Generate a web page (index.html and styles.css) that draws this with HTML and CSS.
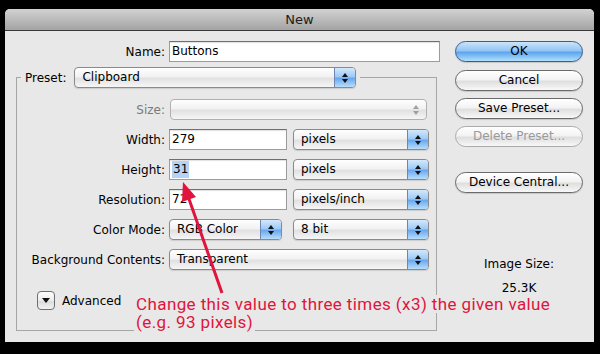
FILE: index.html
```html
<!DOCTYPE html>
<html lang="en">
<head>
    <meta charset="UTF-8">
    <meta name="viewport" content="width=device-width, initial-scale=1.0">
    <title>New</title>
    <link rel="stylesheet" href="styles.css">
</head>
<body>
    <div class="dialog">
        <div class="titlebar">New</div>

        <div class="content">
            <div class="form">
                <div class="row name-row">
                    <label class="lbl">Name:</label>
                    <div class="field name-field">Buttons</div>
                </div>

                <fieldset class="group">
                    <legend class="legend">
                        <div class="legend-inner">
                            <label class="legend-lbl">Preset:</label>
                            <div class="popup preset">Clipboard<span class="arrows"></span></div>
                        </div>
                    </legend>

                    <div class="row">
                        <label class="lbl inner muted">Size:</label>
                        <div class="popup disabled size-popup"><span class="arrows"></span></div>
                    </div>

                    <div class="row">
                        <label class="lbl inner">Width:</label>
                        <div class="field num-field">279</div>
                        <div class="popup unit">pixels<span class="arrows"></span></div>
                    </div>

                    <div class="row">
                        <label class="lbl inner">Height:</label>
                        <div class="field num-field"><span class="selected">31</span></div>
                        <div class="popup unit">pixels<span class="arrows"></span></div>
                    </div>

                    <div class="row">
                        <label class="lbl inner">Resolution:</label>
                        <div class="field num-field">72</div>
                        <div class="popup unit">pixels/inch<span class="arrows"></span></div>
                    </div>

                    <div class="row">
                        <label class="lbl inner">Color Mode:</label>
                        <div class="popup mode">RGB Color<span class="arrows"></span></div>
                        <div class="popup unit">8 bit<span class="arrows"></span></div>
                    </div>

                    <div class="row">
                        <label class="lbl inner">Background Contents:</label>
                        <div class="popup bg-popup">Transparent<span class="arrows"></span></div>
                    </div>

                    <div class="advanced">
                        <span class="disclosure"></span>
                        <span>Advanced</span>
                    </div>
                </fieldset>
            </div>

            <div class="side">
                <button class="btn btn-default">OK</button>
                <button class="btn">Cancel</button>
                <button class="btn">Save Preset...</button>
                <button class="btn" disabled>Delete Preset...</button>
                <button class="btn btn-device">Device Central...</button>

                <div class="image-size">
                    <div>Image Size:</div>
                    <div>25.3K</div>
                </div>
            </div>
        </div>
    </div>

    <!-- annotation drawn over the screenshot -->
    <div class="note">
        <span class="note-line">Change this value to three times (x3) the given value</span>
        <span class="note-line">(e.g. 93 pixels)</span>
    </div>

    <svg class="arrow" width="600" height="354" viewBox="0 0 600 354">
        <line x1="222" y1="293" x2="189" y2="199" stroke="#e0143c" stroke-width="3"/>
        <polygon points="183,182 196,197 182,202" fill="#e0143c"/>
    </svg>
</body>
</html>
```

FILE: styles.css
```css
body {
    margin: 0;
    width: 600px;
    height: 354px;
    overflow: hidden;
    background-color: #000;
    font-family: "DejaVu Sans", sans-serif;
    font-size: 12px;
    color: #000;
}

.dialog {
    margin: 9px 0 0 5px;
    width: 589px;
    height: 333px;
    background-color: #e8e8e8;
    border-radius: 5px 5px 0 0;
}

.titlebar {
    height: 21px;
    line-height: 21px;
    text-align: center;
    font-size: 13px;
    color: #1c1c1c;
    background: linear-gradient(#d2d2d2, #a3a3a3);
    border-bottom: 1px solid #3a3a3a;
    border-radius: 5px 5px 0 0;
}

.content {
    display: flex;
    gap: 15px;
    padding-top: 10px;
}

.form {
    width: 435px;
}

.row {
    display: flex;
    align-items: center;
    height: 21px;
    margin-bottom: 9px;
}
.name-row {
    margin-bottom: 0;
}

.lbl {
    width: 160px;
    margin-right: 4px;
    text-align: right;
    flex-shrink: 0;
}
.lbl.inner {
    width: 148px;
}
.muted {
    color: #7a7a7a;
}

/* text fields */
.field {
    box-sizing: border-box;
    height: 21px;
    line-height: 19px;
    padding: 0 2px;
    background-color: #fff;
    border: 1px solid #9c9c9c;
    border-top-color: #6f6f6f;
    box-shadow: inset 0 1px 1px rgba(0,0,0,0.12);
    white-space: nowrap;
}
.name-field {
    width: 271px;
}
.num-field {
    width: 118px;
    margin-right: 6px;
}
.selected {
    background-color: #b5d3f5;
    padding: 1px 1px 2px;
}

/* popup menus */
.popup {
    box-sizing: border-box;
    height: 21px;
    line-height: 19px;
    display: flex;
    padding-left: 7px;
    border: 1px solid #8a8a8a;
    border-radius: 4px;
    background: linear-gradient(#fefefe, #f2f2f2 45%, #e1e1e1 55%, #f6f6f6);
    box-shadow: 0 1px 1px rgba(0,0,0,0.12);
    white-space: nowrap;
}
.arrows {
    margin-left: auto;
    width: 20px;
    display: flex;
    flex-direction: column;
    align-items: center;
    justify-content: center;
    gap: 2px;
    border-left: 1px solid #6f87b0;
    border-radius: 0 3px 3px 0;
    background: linear-gradient(#d3e8fc, #9fcaf5 45%, #6aa8ee 55%, #b8defb);
}
.arrows::before,
.arrows::after {
    content: "";
    width: 0;
    height: 0;
    border-left: 3px solid transparent;
    border-right: 3px solid transparent;
}
.arrows::before {
    border-bottom: 4px solid #111;
}
.arrows::after {
    border-top: 4px solid #111;
}
.popup.disabled {
    border-color: #b0b0b0;
    box-shadow: none;
}
.popup.disabled .arrows {
    background: transparent;
    border-left: none;
}
.popup.disabled .arrows::before {
    border-bottom-color: #a0a0a0;
}
.popup.disabled .arrows::after {
    border-top-color: #a0a0a0;
}

.preset {
    width: 282px;
}
.size-popup {
    width: 257px;
    margin-left: 1px;
}
.unit {
    width: 136px;
}
.mode {
    width: 113px;
    margin-right: 11px;
}
.bg-popup {
    width: 260px;
}

/* preset group */
.group {
    box-sizing: border-box;
    width: 421px;
    margin: 5px 0 0 11px;
    padding: 11px 0 20px 0;
    border: 1px solid #a6a6a6;
    min-inline-size: 0;
}
.legend {
    margin-left: 4px;
    padding: 0 4px;
}
.legend-inner {
    display: flex;
    align-items: center;
    gap: 8px;
}

.advanced {
    display: flex;
    align-items: center;
    gap: 7px;
    height: 19px;
    margin: 21px 0 0 20px;
}
.disclosure {
    box-sizing: border-box;
    width: 18px;
    height: 19px;
    display: flex;
    align-items: center;
    justify-content: center;
    border: 1px solid #6e6e6e;
    border-radius: 4px;
    background: linear-gradient(#fdfdfd, #ececec 50%, #dcdcdc 55%, #f2f2f2);
}
.disclosure::after {
    content: "";
    border-left: 4px solid transparent;
    border-right: 4px solid transparent;
    border-top: 5px solid #111;
}

/* right column */
.side {
    width: 128px;
    display: flex;
    flex-direction: column;
}
.btn {
    box-sizing: border-box;
    height: 21px;
    margin-bottom: 7px;
    padding: 0;
    font-family: "DejaVu Sans", sans-serif;
    font-size: 12px;
    line-height: 19px;
    color: #000;
    border: 1px solid #6a6a6a;
    border-radius: 11px;
    background: linear-gradient(#ffffff, #f3f3f3 45%, #dfdfdf 55%, #f8f8f8);
    box-shadow: 0 1px 1px rgba(0,0,0,0.15);
}
.btn-default {
    margin-bottom: 8px;
    border-color: #3d5b8c;
    background: linear-gradient(#cbe4fb, #93c5f4 45%, #5fa5ed 55%, #b0e0fc);
}
.btn:disabled {
    color: #9a9a9a;
    border-color: #ababab;
    box-shadow: none;
}
.btn-device {
    margin-top: 18px;
}

.image-size {
    margin-top: 52px;
    text-align: center;
    line-height: 24px;
}

/* annotation */
.note {
    position: absolute;
    left: 134px;
    top: 295px;
    font-family: Roboto, sans-serif;
    font-size: 17px;
    letter-spacing: 0.4px;
    color: #e0143c;
    white-space: nowrap;
}
.note-line {
    display: block;
    width: fit-content;
    height: 18px;
    line-height: 18px;
    padding: 0 2px;
    background-color: #e8e8e8;
}

.arrow {
    position: absolute;
    left: 0;
    top: 0;
    pointer-events: none;
}
```
